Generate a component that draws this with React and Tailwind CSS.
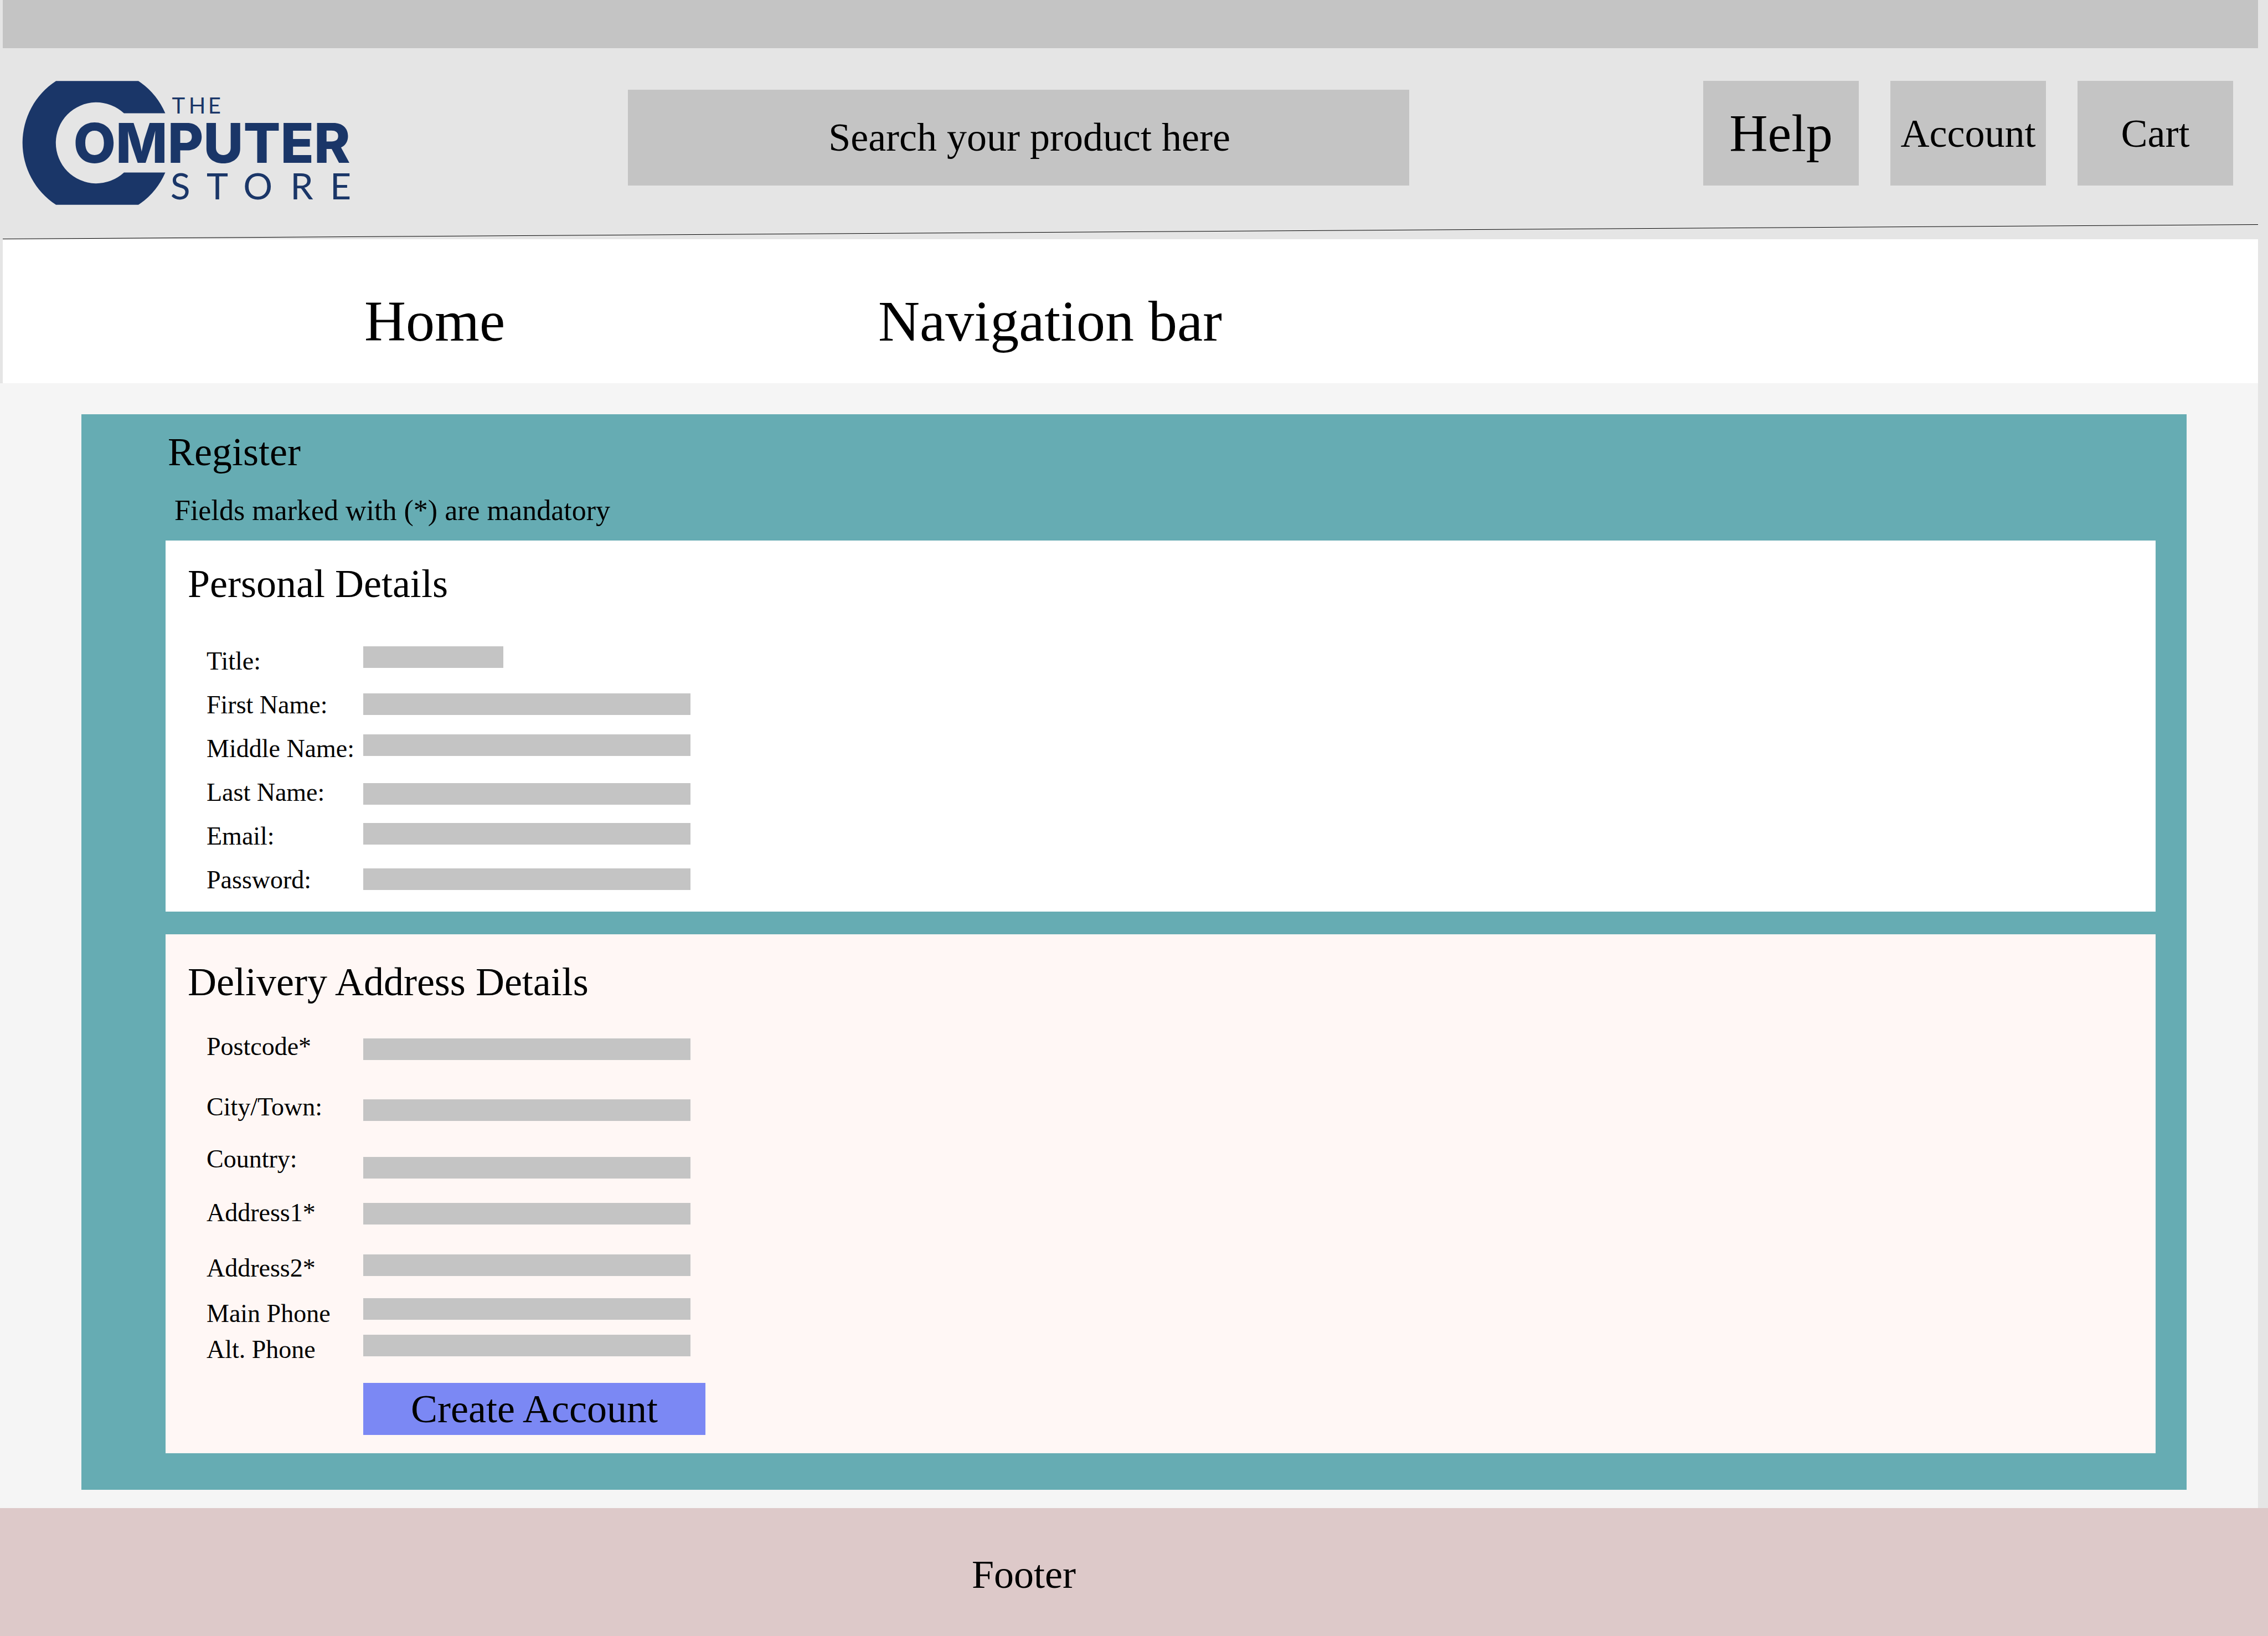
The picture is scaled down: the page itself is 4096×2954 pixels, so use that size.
const personalFields = [
  { id: "title", label: "Title:", type: "text", box: "w-[253px]" },
  { id: "first-name", label: "First Name:", type: "text", box: "mt-[46px] w-[591px]" },
  { id: "middle-name", label: "Middle Name:", type: "text", box: "mt-[35px] w-[591px]" },
  { id: "last-name", label: "Last Name:", type: "text", box: "mt-[49px] w-[591px]" },
  { id: "email", label: "Email:", type: "email", box: "mt-[33px] w-[591px]" },
  { id: "password", label: "Password:", type: "password", box: "mt-[43px] w-[591px]" },
];

const addressFields = [
  { id: "postcode", label: "Postcode*", type: "text", row: "", box: "w-[591px]" },
  { id: "city", label: "City/Town:", type: "text", row: "mt-[63px]", box: "mt-[71px] w-[591px]" },
  { id: "country", label: "Country:", type: "text", row: "mt-[48px]", box: "mt-[65px] w-[591px]" },
  { id: "address1", label: "Address1*", type: "text", row: "mt-[51px]", box: "mt-[44px] w-[591px]" },
  { id: "address2", label: "Address2*", type: "text", row: "mt-[54px]", box: "mt-[54px] w-[591px]" },
  { id: "main-phone", label: "Main Phone", type: "tel", row: "mt-[36px]", box: "mt-[40px] w-[591px]" },
  { id: "alt-phone", label: "Alt. Phone", type: "tel", row: "mt-[19px]", box: "mt-[27px] w-[591px]" },
];

function Logo() {
  return (
    <svg
      viewBox="58 208 850 318"
      className="h-[224px] w-[598px] shrink-0 overflow-visible"
      fill="#1a3668"
      role="img"
      aria-label="The Computer Store"
    >
      <path d="M143.500 208H355A190 190 0 0 1 424 291H318A104 104 0 1 0 318 443H424A190 190 0 0 1 355 526H143.500A190 190 0 0 1 143.500 208Z" />
      <text x="441 484 534" y="292" fontSize="57" fontFamily="Lato, sans-serif">THE</text>
      <text x="188" y="418" fontSize="141" fontWeight="800" fontFamily="Inter, sans-serif">OMPUTER</text>
      <text x="437 530 624 745 847" y="512" fontSize="94" fontFamily="Lato, sans-serif">STORE</text>
    </svg>
  );
}

function HeaderButton({ children, size }) {
  return (
    <button type="button" className={`h-[189px] w-[281px] bg-[#c4c4c4] text-center ${size}`}>
      {children}
    </button>
  );
}

function FieldBox({ field }) {
  return (
    <input
      id={field.id}
      name={field.id}
      type={field.type}
      className={`block h-[39px] bg-[#c4c4c4] px-3 text-3xl outline-none ${field.box}`}
    />
  );
}

export default function App() {
  return (
    <div className="flex min-h-screen flex-col bg-[#e5e5e5] font-['Liberation_Serif',serif] text-black">
      <div className="mr-[18px] ml-[5px] h-[87px] bg-[#c4c4c4]" />

      <header className="mr-[18px] ml-[5px]">
        <div className="flex items-start pt-[59px] pr-[45px] pb-[35px] pl-9">
          <Logo />
          <input
            type="search"
            aria-label="Search products"
            placeholder="Search your product here"
            className="mt-4 mr-[531px] ml-[495px] h-[173px] min-w-0 flex-1 bg-[#c4c4c4] pl-16 text-center text-[72px] outline-none placeholder:text-black placeholder:opacity-100"
          />
          <div className="flex gap-[57px]">
            <HeaderButton size="text-[96px]">Help</HeaderButton>
            <HeaderButton size="text-[72px]">Account</HeaderButton>
            <HeaderButton size="text-[72px]">Cart</HeaderButton>
          </div>
        </div>
        <svg viewBox="0 0 4073 27" preserveAspectRatio="none" className="block h-[27px] w-full" aria-hidden="true">
          <line x1="0" y1="26.500" x2="4073" y2="0.500" stroke="#000" strokeWidth="1" />
        </svg>
      </header>

      <nav className="mr-[18px] ml-[5px] h-[260px] bg-white">
        <ul className="flex h-full items-center pt-9 pl-[653px] text-[104px] leading-none">
          <li className="w-[928px]">
            <a href="#home">Home</a>
          </li>
          <li>
            <a href="#navigation">Navigation bar</a>
          </li>
        </ul>
      </nav>

      <main className="mr-[18px] bg-[#f5f5f5] pt-14 pr-[129px] pb-[33px] pl-[147px]">
        <form className="bg-[#66acb3] pt-8 pr-14 pb-[66px] pl-[152px]" onSubmit={(e) => e.preventDefault()}>
          <h1 className="pl-1 text-[72px] leading-[72px]">Register</h1>
          <p className="mt-11 pl-4 text-[52px] leading-[52px]">Fields marked with (*) are mandatory</p>

          <section className="mt-7 bg-white pt-[42px] pb-[34px] pl-10">
            <h2 className="text-[72px] leading-[72px]">Personal Details</h2>
            <div className="mt-[77px] flex pl-[34px]">
              <div className="flex w-[283px] flex-col gap-[33px] pt-1">
                {personalFields.map((f) => (
                  <label key={f.id} htmlFor={f.id} className="text-[46px] leading-[46px] whitespace-nowrap">
                    {f.label}
                  </label>
                ))}
              </div>
              <div>
                {personalFields.map((f) => (
                  <FieldBox key={f.id} field={f} />
                ))}
              </div>
            </div>
          </section>

          <section className="mt-[41px] bg-[#fff7f5] pt-[50px] pb-[33px] pl-10">
            <h2 className="text-[72px] leading-[72px]">Delivery Address Details</h2>
            <div className="mt-[58px] flex pl-[34px]">
              <div className="flex w-[283px] flex-col">
                {addressFields.map((f) => (
                  <label
                    key={f.id}
                    htmlFor={f.id}
                    className={`text-[46px] leading-[46px] whitespace-nowrap ${f.row}`}
                  >
                    {f.label}
                  </label>
                ))}
              </div>
              <div className="pt-2">
                {addressFields.map((f) => (
                  <FieldBox key={f.id} field={f} />
                ))}
                <button
                  type="submit"
                  className="mt-12 block h-[94px] w-[618px] bg-[#7b88f4] text-center text-[72px] leading-[72px]"
                >
                  Create Account
                </button>
              </div>
            </div>
          </section>
        </form>
      </main>

      <footer className="flex-1 bg-[#ddc9c9] pt-[84px] pb-[75px] pl-[1755px]">
        <p className="text-[72px] leading-[72px]">Footer</p>
      </footer>
    </div>
  );
}
